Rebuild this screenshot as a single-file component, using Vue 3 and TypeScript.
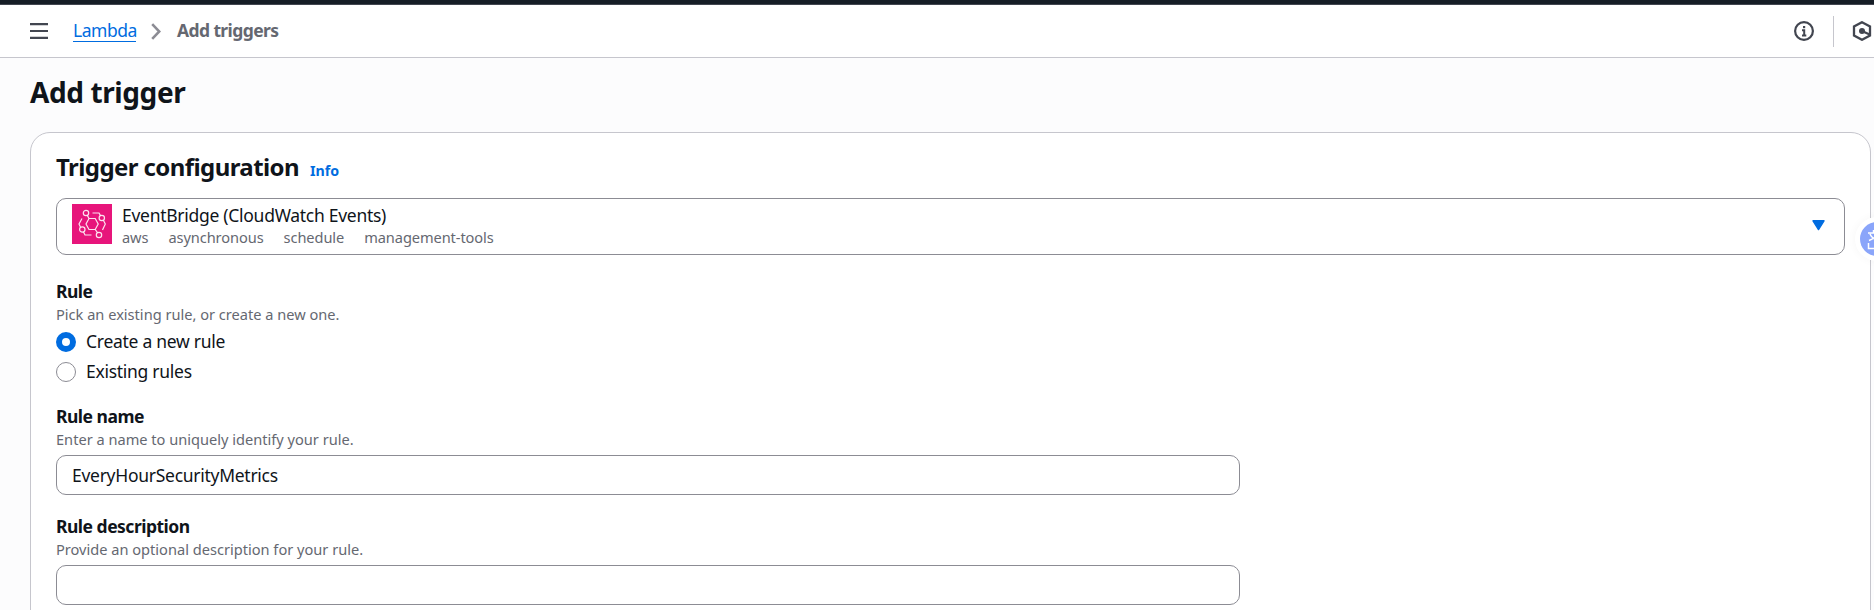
<script setup lang="ts">
import { ref } from 'vue'

const tags: string[] = ['aws', 'asynchronous', 'schedule', 'management-tools']
const mode = ref<'new' | 'existing'>('new')
const ruleName = ref('EveryHourSecurityMetrics')
const description = ref('')
</script>

<template>
  <div class="page">
    <div class="strip"></div>
    <header class="bar">
      <svg class="menu" width="18" height="16" viewBox="0 0 18 16">
        <path d="M0 1.1h18M0 8h18M0 14.9h18" stroke="#424650" stroke-width="2.2" />
      </svg>
      <a class="crumb-link">Lambda</a>
      <svg class="chevron" width="10" height="17" viewBox="0 0 10 17">
        <path d="M1.2 1.2 8.3 8.5 1.2 15.8" fill="none" stroke="#8c8c94" stroke-width="2.6" />
      </svg>
      <span class="crumb">Add triggers</span>
      <div class="tools">
        <svg width="20" height="20" viewBox="0 0 20 20">
          <circle cx="10" cy="10" r="8.9" fill="none" stroke="#424650" stroke-width="2.2" />
          <path d="M8 9.2h2.2v4.6M8 14.4h4.3" fill="none" stroke="#424650" stroke-width="2" />
          <rect x="9" y="5" width="2.2" height="2.2" fill="#424650" />
        </svg>
        <i class="divider"></i>
        <svg width="20" height="20" viewBox="0 0 20 20">
          <path d="M10 1.2 18 5.4v9.2l-8 4.2-8-4.2V5.4z" fill="none" stroke="#424650" stroke-width="2.3" />
          <circle cx="10" cy="10" r="3" fill="#424650" />
          <path d="M10 10l7.6 3.6" stroke="#424650" stroke-width="2.2" />
        </svg>
      </div>
    </header>

    <h1>Add trigger</h1>

    <section class="card">
      <div class="card-head">
        <h2>Trigger configuration</h2>
        <a class="info">Info</a>
      </div>

      <div class="select">
        <svg class="logo" width="40" height="40" viewBox="0 0 40 40">
          <rect width="40" height="40" fill="#e7157b" />
          <g fill="none" stroke="#fff" stroke-opacity=".88" stroke-width="1.2">
            <path d="M17 14.5h6.2l3 5.5-3 5.5H17L14 20z" />
            <circle cx="14" cy="9" r="2.7" />
            <circle cx="29.8" cy="14" r="2.7" />
            <circle cx="10.3" cy="25.5" r="2.7" />
            <circle cx="27" cy="31" r="2.7" />
            <path d="M15.3 11.4 17 14.5M23.2 25.5l2.3 3.1M20.5 9H27l1.5 2.6M19.5 31H13l-1.5-3M10 14.5 7 20l1.4 3M30.5 26l2.8-6-1.8-3.6" />
          </g>
        </svg>
        <div class="option">
          <div class="text name">EventBridge (CloudWatch Events)</div>
          <div class="tags">
            <span v-for="tag in tags" :key="tag">{{ tag }}</span>
          </div>
        </div>
        <svg class="caret" width="13" height="11" viewBox="0 0 13 11">
          <path d="M1 .8h11L6.5 9.6z" fill="#006ce0" stroke="#006ce0" stroke-width="1.4" stroke-linejoin="round" />
        </svg>
      </div>

      <div class="field rule">
        <div class="label">Rule</div>
        <div class="hint">Pick an existing rule, or create a new one.</div>
        <div class="radio" @click="mode = 'new'">
          <i :class="{ on: mode === 'new' }"></i><span class="text">Create a new rule</span>
        </div>
        <div class="radio" @click="mode = 'existing'">
          <i :class="{ on: mode === 'existing' }"></i><span class="text">Existing rules</span>
        </div>
      </div>

      <div class="field rule-name">
        <div class="label">Rule name</div>
        <div class="hint">Enter a name to uniquely identify your rule.</div>
        <input v-model="ruleName" class="text" type="text" spellcheck="false" />
      </div>

      <div class="field">
        <div class="label">Rule description</div>
        <div class="hint">Provide an optional description for your rule.</div>
        <input v-model="description" class="text" type="text" />
      </div>
    </section>

    <div class="translate">
      <svg width="34" height="34" viewBox="0 0 34 34">
        <circle cx="17" cy="17" r="17" fill="#8aa5fa" />
        <g fill="none" stroke="#fff" stroke-width="1.5">
          <path d="M8 11h11M13.5 8v3M10 12c1 3 4 5 8 6.5M17 12c-1 3-4 5-8 6.5M8.5 21v5.5H15" />
        </g>
      </svg>
    </div>
  </div>
</template>

<style>
html,
body {
  overflow: hidden;
}
</style>

<style scoped>
.page {
  position: relative;
  box-sizing: border-box;
  width: 100vw;
  height: 610px;
  overflow: hidden;
  background: #fcfcfd;
  color: #0f141a;
  font-family: 'Noto Sans', sans-serif;
  font-size: 17.5px;
  line-height: 25px;
  white-space: nowrap;
}
.strip {
  height: 4px;
  background: #161d26;
  border-bottom: 1px solid #424650;
}
.bar {
  display: flex;
  align-items: center;
  box-sizing: border-box;
  height: 53px;
  padding-left: 30px;
  background: #fff;
  border-bottom: 1px solid #c6c6cd;
}
.crumb-link {
  margin-left: 25px;
  width: 63px;
  height: 21px;
  line-height: 20px;
  color: #006ce0;
  border-bottom: 1px solid #006ce0;
  letter-spacing: -0.45px;
}
.chevron {
  margin-left: 15px;
}
.crumb {
  margin: -2px 0 0 16px;
  color: #656871;
  font-weight: 700;
  letter-spacing: -0.6px;
}
.tools {
  display: flex;
  align-items: center;
  margin-left: auto;
  margin-right: 2px;
}
.divider {
  width: 1px;
  height: 31px;
  margin: 0 18px 0 19px;
  background: #c6c6cd;
}
h1 {
  margin: 14px 0 0 30px;
  font-size: 28px;
  line-height: 40px;
  letter-spacing: -0.4px;
}
.card {
  box-sizing: border-box;
  width: 1841px;
  height: 520px;
  margin: 20px 0 0 30px;
  padding: 19px 25px;
  background: #fff;
  border: 1px solid #c6c6cd;
  border-radius: 20px;
}
.card-head {
  display: flex;
  align-items: baseline;
  height: 46px;
}
h2 {
  margin: 0;
  font-size: 24px;
  line-height: 30px;
  letter-spacing: -0.58px;
}
.info {
  margin-left: 11px;
  color: #006ce0;
  font-size: 14.2px;
  font-weight: 700;
}
.select {
  display: flex;
  box-sizing: border-box;
  height: 57px;
  padding: 5px 19px 0 15px;
  border: 1px solid #8c8c94;
  border-radius: 10px;
}
.option {
  margin-left: 10px;
}
.name {
  height: 24px;
  margin-top: -1px;
}
.tags {
  display: flex;
  gap: 20px;
  color: #656871;
  font-size: 14.6px;
  line-height: 20px;
  letter-spacing: -0.08px;
}
.caret {
  margin: 16px 0 0 auto;
}
.field {
  margin-top: 19px;
}
.rule {
  margin-top: 24px;
}
.rule-name {
  margin-top: 17px;
}
.label {
  font-weight: 700;
  letter-spacing: -0.5px;
}
.hint {
  height: 21px;
  color: #656871;
  font-size: 14.6px;
  line-height: 20px;
}
.rule .hint {
  height: 23px;
}
.radio {
  display: flex;
  align-items: center;
  height: 30px;
}
.radio i {
  box-sizing: border-box;
  width: 20px;
  height: 20px;
  margin-right: 10px;
  border: 1px solid #8c8c94;
  border-radius: 50%;
}
.radio i.on {
  border: 6px solid #006ce0;
}
.radio .text {
  margin-top: -1px;
}
input {
  display: block;
  box-sizing: border-box;
  width: 1184px;
  height: 40px;
  margin: 5px 0 0;
  padding: 0 15px;
  border: 1px solid #8c8c94;
  border-radius: 10px;
  outline: 0;
  background: #fff;
  color: #0f141a;
  font: inherit;
}
.text {
  letter-spacing: -0.28px;
}
.translate {
  position: absolute;
  left: 1855px;
  top: 217px;
  width: 44px;
  height: 44px;
  padding: 5px;
  box-sizing: border-box;
  border-radius: 50%;
  background: #fff;
  box-shadow: 0 0 10px rgba(0, 0, 0, 0.04);
}
.translate svg {
  display: block;
}
</style>
